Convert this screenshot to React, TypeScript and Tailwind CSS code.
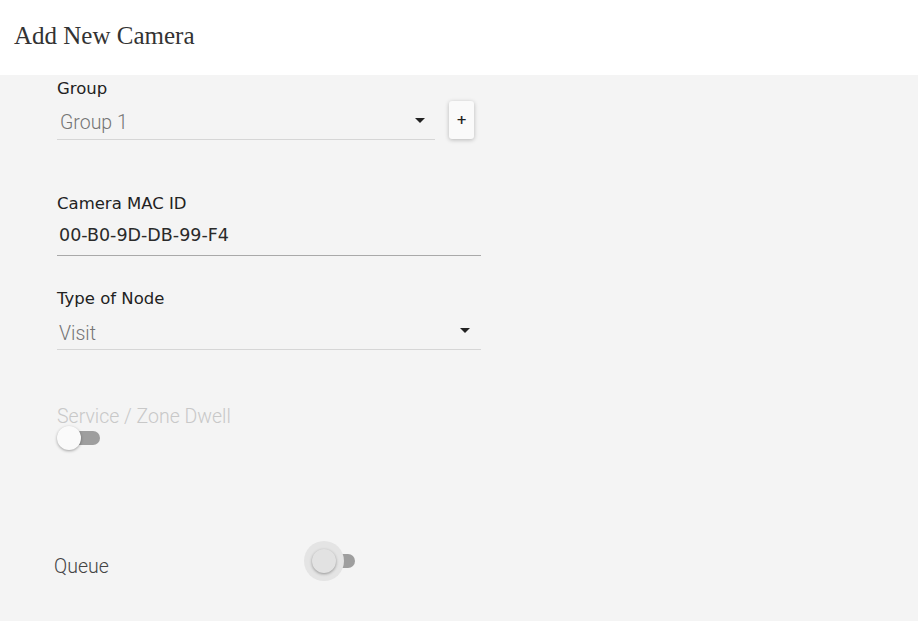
import React from 'react';

function Caret() {
    return (
        <svg width="10" height="5" viewBox="0 0 10 5" className="-mt-[2px] shrink-0">
            <path d="M0 0h10L5 5z" fill="#222" />
        </svg>
    );
}

interface ToggleProps {
    halo?: boolean;
    thumb: string;
}

function Toggle({ halo, thumb }: ToggleProps) {
    return (
        <div className="relative h-[40px] w-[52px]">
            <div className="absolute left-[20px] top-[13px] h-[14px] w-[31px] rounded-full bg-[#9e9e9e]" />
            {halo && <div className="absolute left-0 top-0 h-[40px] w-[40px] rounded-full bg-[#e4e4e4]" />}
            <div
                className={`absolute left-[8px] top-[8px] h-[24px] w-[24px] rounded-full shadow-[0_1px_3px_rgba(0,0,0,0.35)] ${thumb}`}
            />
        </div>
    );
}

export default function App() {
    return (
        <div className="flex min-h-[621px] flex-col bg-[#f4f4f4]">
            <header className="flex h-[75px] items-center bg-white px-[14px] pb-[4px]">
                <h1 className="text-[25px] text-[#333] [font-family:'Liberation_Serif',serif]">Add New Camera</h1>
            </header>

            <main className="flex flex-col pl-[57px] [font-family:'DejaVu_Sans',sans-serif]">
                <label className="mt-[4px] text-[16.5px] leading-[20px] text-[#222]">Group</label>
                <div className="flex items-end gap-[14px]">
                    <div className="flex h-[41px] w-[378px] items-center justify-between border-b border-[#d6d6d6] pl-[3px] pr-[10px] pt-[4px]">
                        <span className="pt-[4px] text-[19.5px] font-light text-[#757575] [font-family:Roboto,sans-serif]">Group 1</span>
                        <Caret />
                    </div>
                    <button className="mb-px flex h-[38px] w-[25px] items-center justify-center rounded-[3px] bg-[#fafafa] text-[17px] font-semibold text-[#222] shadow-[0_1px_4px_rgba(0,0,0,0.25)] [font-family:'Open_Sans',sans-serif]">
                        +
                    </button>
                </div>

                <label className="mt-[54px] text-[16.5px] leading-[20px] text-[#222]">Camera MAC ID</label>
                <div className="flex h-[42px] w-[424px] items-center border-b border-[#a9a9a9] pl-[2px] pt-[2px]">
                    <span className="text-[17.5px] text-[#2a2a2a]">00-B0-9D-DB-99-F4</span>
                </div>

                <label className="mt-[33px] text-[16.5px] leading-[20px] text-[#222]">Type of Node</label>
                <div className="flex h-[41px] w-[424px] items-center justify-between border-b border-[#d6d6d6] pl-[2px] pr-[11px] pt-[4px]">
                    <span className="pt-[5px] text-[19.5px] font-light text-[#757575] [font-family:Roboto,sans-serif]">Visit</span>
                    <Caret />
                </div>

                <label className="mt-[56px] text-[19.5px] font-light leading-[22px] text-[#c8c8c8] [font-family:Roboto,sans-serif]">
                    Service / Zone Dwell
                </label>
                <div className="-ml-[8px] -mt-[10px]">
                    <Toggle thumb="bg-[#fafafa]" />
                </div>

                <div className="-ml-[3px] mt-[83px] flex items-center">
                    <span className="w-[250px] pt-[11px] text-[19.5px] font-light text-[#444] [font-family:Roboto,sans-serif]">Queue</span>
                    <Toggle halo thumb="bg-[#e2e2e2]" />
                </div>
            </main>
        </div>
    );
}
